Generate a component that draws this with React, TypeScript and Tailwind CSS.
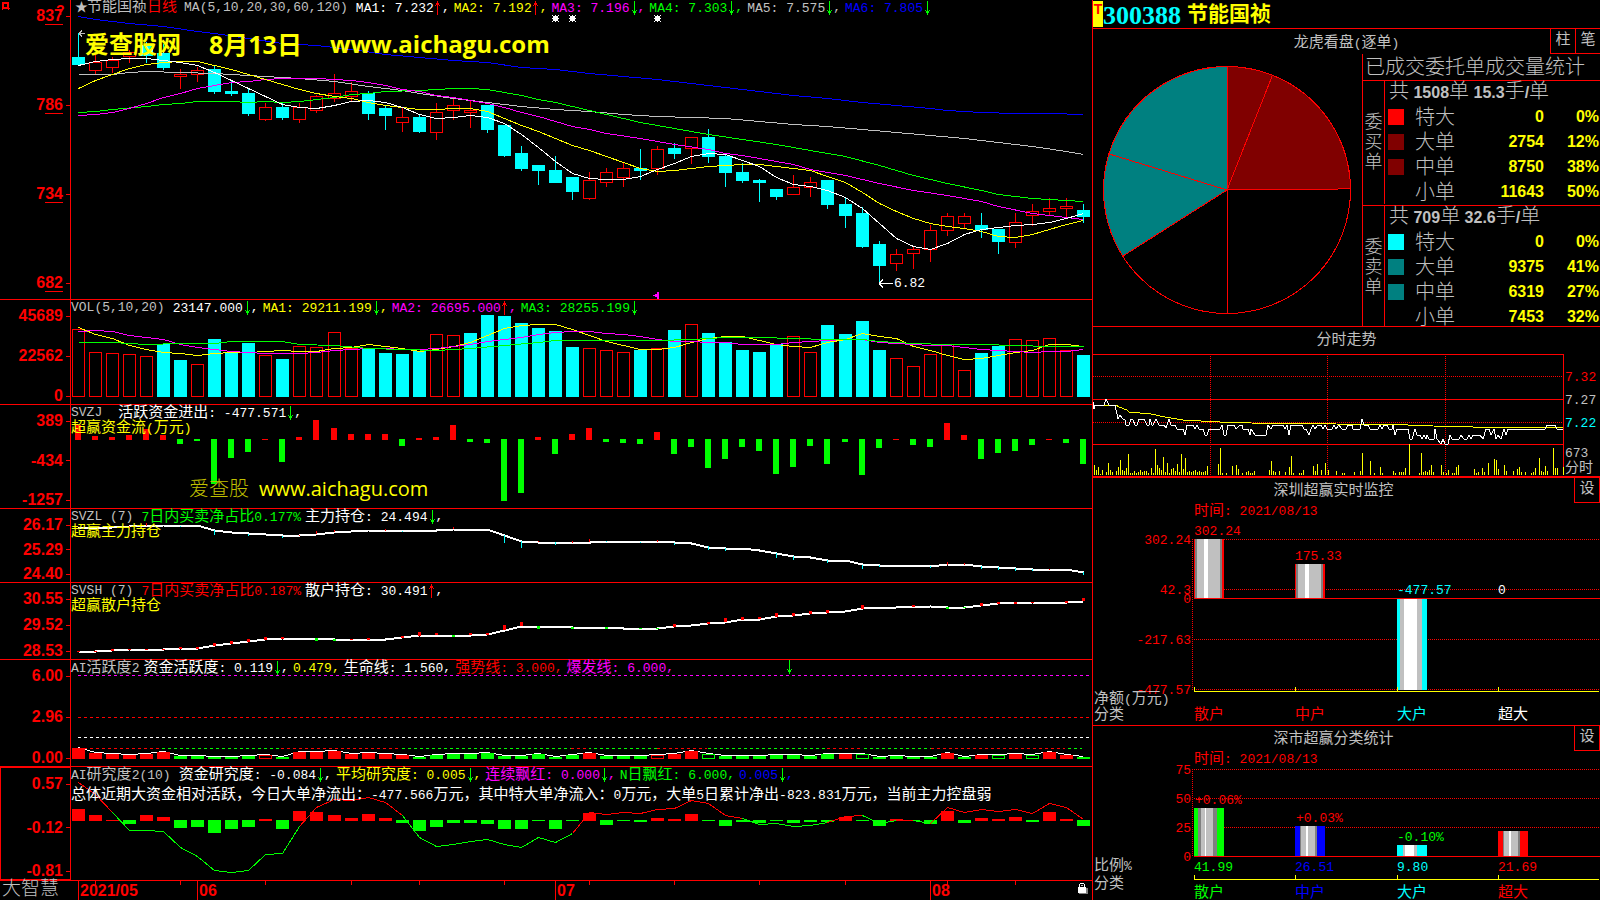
// src/App.tsx
import type { ReactNode } from "react";

const RED = "#ff0000";
const GREEN = "#00ff00";
const CYAN = "#00ffff";
const YELLOW = "#ffff00";
const MAGENTA = "#ff00ff";
const BLUE = "#0000ff";
const SILVER = "#c0c0c0";
const WHITE = "#ffffff";

const CHART_WIDTH = 1021;

type Point = [number, number];

// [high, body top, body bottom, low, rising]
const candles: [number, number, number, number, 0 | 1][] = [
  [33, 57, 65, 65, 0], [55, 62, 71, 74, 1], [57, 60, 68, 73, 1], [50, 52, 57, 63, 1],
  [42, 45, 56, 63, 0], [44, 53, 68, 70, 0], [69, 74, 77, 89, 1], [67, 70, 75, 82, 1],
  [66, 69, 92, 94, 0], [80, 91, 94, 96, 0], [89, 93, 114, 116, 0], [103, 107, 120, 121, 1],
  [103, 107, 118, 120, 0], [103, 107, 120, 123, 1], [95, 96, 111, 113, 1], [74, 93, 99, 102, 1],
  [82, 91, 97, 101, 1], [91, 93, 114, 120, 0], [105, 108, 116, 130, 0], [107, 117, 123, 132, 1],
  [114, 117, 132, 133, 0], [103, 112, 133, 140, 1], [97, 105, 111, 120, 1], [101, 110, 113, 128, 1],
  [105, 105, 130, 133, 0], [125, 125, 156, 157, 0], [146, 153, 169, 171, 0], [165, 165, 171, 185, 0],
  [156, 170, 183, 183, 0], [177, 177, 192, 200, 0], [172, 180, 199, 200, 1], [168, 172, 183, 187, 1],
  [163, 168, 178, 187, 1], [149, 168, 171, 180, 0], [146, 149, 169, 175, 1], [143, 148, 154, 159, 0],
  [137, 137, 149, 164, 1], [129, 137, 157, 163, 0], [153, 156, 173, 187, 0], [163, 172, 181, 183, 0],
  [179, 180, 183, 202, 0], [189, 189, 197, 200, 0], [175, 187, 195, 195, 1], [177, 182, 188, 197, 1],
  [180, 180, 205, 209, 0], [198, 204, 216, 228, 0], [207, 213, 247, 248, 0], [241, 244, 266, 284, 0],
  [249, 254, 264, 271, 1], [247, 249, 254, 269, 1], [225, 230, 250, 262, 1], [213, 216, 231, 236, 1],
  [213, 216, 224, 228, 1], [213, 225, 230, 238, 0], [229, 229, 242, 254, 0], [213, 222, 243, 248, 1],
  [204, 211, 216, 226, 1], [198, 208, 212, 215, 1], [198, 206, 209, 217, 1], [204, 210, 217, 223, 0],
];

const ma5 = [
  65, 61, 59, 58, 58, 60, 62, 65, 72, 80, 88, 96, 104, 107, 108, 105, 101, 100, 102, 107,
  114, 118, 117, 115, 117, 123, 134, 147, 161, 173, 178, 179, 179, 176, 169, 163, 156, 153, 154, 160,
  166, 177, 184, 186, 190, 197, 208, 223, 238, 246, 249, 243, 234, 229, 227, 225, 224, 222, 218, 213,
];
const ma10 = [
  88, 80, 74, 68, 64, 62, 61, 61, 65, 69, 74, 79, 84, 89, 93, 96, 98, 102, 105, 107,
  109, 109, 108, 108, 111, 118, 125, 131, 138, 145, 150, 156, 162, 168, 171, 170, 168, 166, 165, 164,
  164, 166, 168, 170, 176, 182, 192, 203, 211, 218, 223, 226, 228, 231, 236, 237, 234, 229, 224, 220,
];
const ma20: Point[] = [
  [0, 115], [1, 114], [2, 112], [3, 108], [4, 103], [5, 97], [6, 93], [7, 88], [8, 85], [9, 82],
  [10, 81], [11, 79], [12, 78], [14, 78], [15, 79], [16, 80], [17, 82], [18, 85], [19, 89], [20, 91],
  [21, 95], [22, 97], [23, 100], [24, 103], [25, 107], [26, 112], [27, 116], [28, 121], [29, 126],
  [30, 129], [31, 133], [33, 138], [35, 144], [37, 149], [38, 153], [39, 155], [40, 158], [42, 164],
  [43, 169], [45, 175], [47, 183], [49, 190], [51, 195], [53, 201], [54, 206], [56, 213], [58, 217], [59, 219],
];
const ma30: Point[] = [
  [0, 112], [1, 111], [2, 109], [4, 106], [5, 104], [6, 103], [7, 101], [9, 101], [10, 102], [11, 101],
  [12, 102], [13, 101], [15, 97], [16, 94], [17, 93], [18, 91], [20, 90], [21, 89], [22, 88], [23, 88],
  [24, 89], [25, 92], [26, 95], [27, 99], [28, 102], [30, 110], [31, 114], [33, 122], [35, 128], [37, 134],
  [39, 139], [41, 144], [43, 150], [45, 156], [47, 165], [49, 175], [51, 183], [53, 190], [54, 194], [56, 198], [59, 201],
];
const ma60: Point[] = [
  [0, 74], [2, 74], [3, 72], [4, 71], [6, 72], [8, 73], [9, 74], [11, 76], [13, 78], [15, 81], [17, 86],
  [19, 90], [20, 93], [22, 98], [24, 102], [26, 106], [28, 109], [30, 111], [32, 114], [34, 116], [36, 117],
  [38, 118], [40, 121], [42, 124], [44, 126], [46, 129], [48, 132], [50, 135], [52, 138], [54, 142], [56, 146],
  [58, 151], [59, 154],
];
const ma120: Point[] = [
  [0, 16], [1, 19], [3, 23], [5, 26], [7, 31], [8, 33], [10, 38], [12, 43], [14, 45], [16, 49], [18, 54],
  [20, 57], [22, 60], [24, 62], [26, 67], [28, 69], [30, 73], [32, 76], [34, 79], [36, 83], [38, 87], [40, 91],
  [42, 95], [44, 98], [46, 102], [48, 105], [50, 108], [51, 110], [53, 112], [55, 113], [57, 113], [59, 114],
];

// negative: falling day
const volumes = [
  68, 45, 44, 43, 41, -53, -37, 33, -58, -44, -54, 42, -38, 51, 50, 65, 49, -48, -44, -43,
  -46, 63, 62, -64, -82, -81, -74, -69, -66, -50, 49, 47, 45, -47, 49, -67, 73, -64, -55, -47,
  -45, -53, 61, 45, -72, -63, -76, -47, 39, 31, 43, 53, 27, -44, -51, 58, 57, 59, 47, -42,
];
const volMa5 = [
  27, 34, 38, 45, 49, 52, 53, 55, 53, 52, 52, 51, 50, 51, 51, 48, 47, 44, 46, 48,
  51, 49, 46, 42, 35, 28, 25, 24, 24, 29, 35, 41, 45, 49, 49, 47, 42, 38, 36, 36,
  40, 44, 46, 47, 42, 39, 33, 36, 38, 46, 50, 55, 59, 58, 55, 52, 50, 44, 44, 46,
];
const volMa10 = [
  31, 30, 31, 35, 37, 39, 44, 47, 49, 51, 52, 53, 53, 53, 52, 50, 49, 48, 48, 49,
  49, 48, 46, 44, 41, 39, 37, 34, 32, 31, 31, 33, 34, 36, 39, 41, 41, 42, 42, 44,
  44, 44, 42, 41, 40, 39, 39, 42, 43, 44, 45, 45, 47, 49, 50, 51, 52, 51, 51, 49,
];
const volMa20: Point[] = [
  [0, 42], [2, 42], [4, 44], [6, 43], [8, 43], [9, 41], [12, 41], [13, 44], [15, 45], [17, 48], [19, 49],
  [21, 50], [23, 48], [25, 45], [27, 42], [28, 40], [34, 40], [36, 39], [38, 37], [40, 37], [42, 38], [44, 39],
  [46, 39], [47, 41], [49, 43], [51, 44], [53, 44], [55, 45], [57, 46], [59, 46],
];

const fundFlow = [
  15, 4, 3, 5, 11, 5, -5, -2, -45, -19, -13, 1, -23, 3, 20, 12, 6, 6, 6, -7,
  2, 3, 15, -3, -4, -62, -54, 3, -15, 6, 12, -3, -4, -5, 8, -15, -8, -29, -20, -8,
  -12, -35, -28, -7, -25, -3, -36, -9, 1, -6, -8, 17, 5, -20, -14, -12, -6, 1, -4, -25,
];

const mainHolding: Point[] = [
  [0, 19], [2, 18], [3, 17], [5, 16], [7, 16], [8, 21], [9, 23], [10, 24], [11, 25], [12, 26], [13, 26],
  [14, 25], [15, 23], [17, 21], [21, 21], [22, 20], [24, 20], [25, 26], [26, 32], [27, 33], [30, 33], [30, 32],
  [34, 32], [35, 33], [36, 34], [37, 38], [38, 39], [39, 39], [40, 41], [41, 44], [42, 47], [43, 48], [44, 51],
  [45, 51], [46, 55], [47, 56], [50, 57], [51, 55], [52, 55], [53, 57], [54, 58], [55, 59], [56, 60], [58, 60], [59, 63],
];
// [index, y, height, colour]
const mainMarks: [number, number, number, string][] = [
  [3, 17, 2, RED], [4, 14, 3, RED], [6, 17, 1, CYAN], [8, 21, 5, CYAN], [10, 25, 2, CYAN], [12, 27, 2, CYAN], [13, 26, 1, RED],
  [14, 22, 3, RED], [15, 21, 2, RED], [18, 20, 2, RED], [19, 22, 1, CYAN], [22, 18, 2, RED], [25, 26, 8, CYAN],
  [26, 32, 7, CYAN], [27, 32, 1, RED], [28, 33, 3, CYAN], [29, 32, 2, RED], [30, 30, 3, RED], [31, 32, 1, CYAN],
  [33, 33, 1, CYAN], [34, 31, 2, RED], [35, 34, 2, CYAN], [37, 37, 4, CYAN], [38, 39, 3, CYAN], [41, 44, 5, CYAN],
  [42, 47, 4, CYAN], [44, 51, 3, CYAN], [46, 56, 4, CYAN], [47, 56, 2, CYAN], [50, 57, 2, CYAN], [51, 53, 3, RED],
  [52, 54, 2, RED], [53, 57, 3, CYAN], [54, 58, 3, CYAN], [55, 59, 3, CYAN], [56, 60, 2, CYAN], [57, 60, 1, RED], [59, 63, 3, CYAN],
];

const retailHolding: Point[] = [
  [0, 68], [1, 68], [2, 67], [3, 66], [5, 66], [6, 65], [7, 65], [8, 62], [9, 60], [10, 58], [11, 56], [12, 55],
  [14, 55], [15, 56], [18, 56], [19, 54], [20, 52], [23, 52], [24, 51], [25, 47], [26, 43], [28, 43], [29, 44],
  [31, 44], [32, 45], [34, 45], [35, 43], [36, 42], [37, 40], [38, 39], [39, 36], [40, 36], [41, 33], [42, 32],
  [43, 30], [44, 29], [45, 28], [46, 25], [48, 24], [50, 23], [51, 24], [52, 24], [53, 22], [54, 20], [56, 19],
  [58, 19], [59, 18],
];
const retailMarks: [number, number, number, string][] = [
  [0, 68, 1, RED], [1, 68, 1, RED], [2, 66, 2, RED], [3, 66, 1, RED], [4, 66, 1, RED], [5, 66, 1, RED], [6, 64, 2, RED], [7, 64, 2, RED], [8, 60, 3, RED],
  [9, 58, 3, RED], [10, 56, 3, RED], [11, 54, 3, RED], [12, 54, 2, RED], [14, 55, 3, GREEN], [15, 56, 2, GREEN],
  [16, 56, 1, RED], [17, 55, 2, RED], [19, 53, 2, RED], [20, 49, 4, RED], [21, 50, 2, RED], [22, 52, 2, GREEN],
  [23, 50, 2, RED], [24, 50, 2, RED], [25, 42, 5, RED], [26, 39, 4, RED], [27, 43, 3, GREEN], [29, 44, 2, GREEN],
  [31, 44, 2, GREEN], [33, 45, 1, GREEN], [34, 45, 1, GREEN], [35, 41, 3, RED], [37, 39, 2, RED], [38, 35, 4, RED],
  [39, 34, 3, RED], [40, 34, 2, RED], [41, 30, 4, RED], [42, 30, 3, RED], [43, 28, 3, RED], [44, 27, 3, RED],
  [46, 22, 4, RED], [49, 22, 2, RED], [51, 24, 2, GREEN], [52, 24, 1, GREEN], [53, 20, 3, RED], [54, 19, 2, RED],
  [55, 19, 2, RED], [56, 19, 1, RED], [58, 18, 2, RED], [59, 15, 3, RED],
];

// kind: r/g filled, R/G outlined
const activity = (
  "r11 r6 r5 r4 r5 r7 g3 g3 g2 g2 g3 R4 g2 r7 r7 r8 r5 r6 r5 r4 g2 g4 g5 g5 g6 g3 g3 g5 g2 g4 " +
  "r6 g3 g3 g3 R4 r5 r8 G5 g3 g3 g3 g4 g4 g3 g5 r5 G5 g2 g3 g2 g2 r6 g2 r4 G4 r5 G4 r7 r4 g2"
).split(" ").map((s) => ({ kind: s[0], h: Number(s.slice(1)) }));

const researchBars = [
  12, 6, 1, -4, 6, 4, -8, -7, -13, -9, -7, 2, -9, 10, 9, 6, 3, 7, 3, -3,
  -11, -7, -3, -3, -4, -9, -9, -1, -9, -1, 8, -5, -1, -2, 3, 2, 7, -1, -6, -2,
  -3, -1, -3, -2, -2, 4, -1, -6, 2, -1, -4, 10, -3, 3, 2, 4, -2, 9, 2, -6,
];
const researchLine = [
  15, 27, 45, 63, 63, 64, 80, 89, 103, 105, 103, 87, 86, 59, 40, 32, 33, 30, 35, 48,
  70, 79, 77, 74, 72, 77, 80, 70, 75, 66, 45, 47, 45, 46, 42, 41, 33, 36, 48, 51,
  57, 56, 59, 58, 55, 49, 48, 56, 53, 53, 56, 40, 45, 42, 44, 42, 46, 36, 40, 52,
];
const researchSegments: [number, number, string][] = [
  [0, 2, RED], [2, 13, GREEN], [13, 19, RED], [19, 29, GREEN], [29, 39, RED], [39, 44, GREEN],
  [44, 46, RED], [46, 48, GREEN], [48, 49, RED], [49, 50, GREEN], [50, 59, RED],
];

const intradayPrice =
  "0,48 1,55 2,51 11,51 13,45 16,51 22,51 25,65 27,61 30,65 32,66 33,71 36,71 38,65 40,66 42,71 44,71 46,65 51,65 " +
  "54,71 56,71 57,65 59,71 60,71 63,65 66,71 71,71 73,74 76,65 78,71 82,71 84,75 90,75 92,81 94,71 100,71 102,75 " +
  "104,71 106,75 110,75 112,81 114,81 116,75 127,75 129,71 131,81 133,81 135,71 141,71 143,75 147,71 149,71 150,75 " +
  "155,75 157,81 158,75 162,81 173,81 175,71 178,75 180,71 190,71 192,75 194,71 196,81 198,71 209,71 211,75 213,75 " +
  "216,81 218,75 220,71 222,75 225,71 228,71 230,75 232,71 234,75 239,75 241,71 243,75 246,71 249,75 253,75 255,71 " +
  "259,71 260,75 267,75 269,65 271,71 275,71 277,75 285,75 287,71 289,75 291,71 294,71 296,75 299,75 300,71 302,81 " +
  "304,75 315,75 317,85 319,85 322,75 324,81 327,81 329,85 331,81 333,85 334,81 336,85 341,85 342,75 344,85 348,90 " +
  "350,85 352,90 355,90 357,81 359,85 366,85 368,81 371,85 374,85 376,81 378,85 380,81 387,81 390,85 393,75 396,75 " +
  "398,81 401,75 403,85 405,81 408,85 411,75 413,81 415,75 452,75 454,71 462,71 464,75 470,75";
const intradayAverage =
  "0,51 23,51 26,53 34,56 36,58 58,60 72,63 90,66 108,67 127,68 157,68 158,69 243,70 315,71 340,72 380,73 470,73";
const intradayVolume: Point[] = [
  [1, 10], [3, 5], [5, 8], [7, 1], [9, 5], [13, 3], [15, 12], [17, 5], [19, 3], [23, 4], [25, 8], [27, 15], [29, 5],
  [31, 4], [33, 7], [35, 21], [37, 2], [39, 2], [41, 4], [43, 2], [45, 3], [47, 5], [49, 3], [51, 4], [53, 4], [55, 2],
  [58, 7], [60, 2], [62, 26], [64, 10], [66, 7], [68, 5], [70, 18], [72, 3], [74, 12], [76, 2], [78, 6], [80, 7], [82, 4],
  [84, 11], [86, 3], [88, 21], [90, 6], [92, 17], [94, 3], [96, 4], [98, 3], [100, 4], [102, 5], [104, 3], [106, 4],
  [108, 3], [110, 3], [112, 4], [114, 9], [125, 11], [127, 27], [129, 2], [133, 2], [139, 9], [143, 10], [145, 6],
  [149, 2], [153, 3], [155, 4], [157, 2], [159, 2], [161, 4], [176, 5], [178, 14], [180, 4], [182, 3], [186, 4],
  [192, 3], [196, 8], [198, 19], [200, 2], [206, 2], [208, 2], [210, 5], [220, 9], [222, 4], [224, 11], [228, 5],
  [232, 12], [235, 5], [243, 4], [249, 2], [251, 2], [261, 3], [267, 4], [269, 22], [277, 14], [281, 2], [287, 8],
  [289, 2], [300, 4], [302, 2], [306, 3], [308, 3], [310, 3], [312, 7], [316, 31], [326, 2], [328, 22], [330, 3],
  [332, 4], [334, 3], [336, 5], [338, 10], [340, 3], [348, 10], [350, 3], [353, 2], [355, 5], [359, 2], [361, 2],
  [363, 8], [365, 10], [381, 6], [383, 2], [385, 3], [389, 7], [391, 3], [395, 12], [401, 16], [403, 15], [405, 6],
  [411, 10], [413, 4], [420, 4], [424, 6], [426, 8], [428, 3], [432, 3], [438, 2], [440, 3], [442, 7], [446, 17],
  [448, 4], [450, 3], [452, 9], [454, 4], [460, 27], [462, 7], [464, 7], [470, 8],
];

const barX = (i: number) => 7 + 17 * i + (i >= 15 ? 1 : 0) + (i >= 45 ? 1 : 0);
const toPoints = (points: Point[]) =>
  points.map(([i, y]) => `${barX(i) + 0.5},${y + 0.5}`).join(" ");
const indexed = (values: number[]): Point[] => values.map((v, i) => [i, v]);

const Line = ({ points, color, width = 1 }: { points: Point[]; color: string; width?: number }) => (
  <polyline points={toPoints(points)} fill="none" stroke={color} strokeWidth={width} />
);

// CJK and Latin runs need different sizes to keep the terminal's 15px / 8px pitch
const Mixed = ({
  text,
  cjk = "text-[15px]",
  latin = "text-[13px]",
}: {
  text: string;
  cjk?: string;
  latin?: string;
}) => (
  <>
    {text.split(/([\u3000-\u9fff\uff00-\uffef]+)/).map((run, i) => (
      <span key={i} className={i % 2 ? cjk : latin}>
        {run}
      </span>
    ))}
  </>
);

const Arrow = ({ dir }: { dir: "up" | "down" }) => (
  <svg
    viewBox="0 0 8 14"
    className={`h-3.5 w-2 shrink-0 ${dir === "up" ? "rotate-180" : ""}`}
    shapeRendering="crispEdges"
    fill={dir === "up" ? RED : GREEN}
  >
    <path d="M4 0h1v14h-1zM2 9h1v1h3v-1h1v1h-1v2h-3v-2h-1z" />
  </svg>
);

type Reading = { text: string; color: string; dir?: "up" | "down"; end?: boolean };

const Readings = ({ title, items }: { title: ReactNode; items: Reading[] }) => (
  <div className="absolute left-0 top-0 flex h-4 items-center gap-1 whitespace-pre leading-4 text-[#c0c0c0]">
    {title}
    {items.map((item) => (
      <span key={item.text} className={`flex items-center ${item.color}`}>
        <span className="leading-4">
          <Mixed text={item.text} />
        </span>
        {item.dir && <Arrow dir={item.dir} />}
        {!item.end && <span className="text-[13px]">,</span>}
      </span>
    ))}
  </div>
);

type PanelProps = {
  labels: ReactNode[];
  height: string;
  viewHeight: number;
  axisClass?: string;
  chart: ReactNode;
  children: ReactNode;
};

const Panel = ({ labels, height, viewHeight, axisClass = "border-r", chart, children }: PanelProps) => (
  <section className={`flex border-b border-[#ff0000] ${height}`}>
    <div
      className={`flex w-[71px] shrink-0 flex-col justify-between border-[#ff0000] pt-2 font-['Liberation_Sans',sans-serif] text-base font-bold leading-4 text-[#ff0000] ${axisClass}`}
    >
      {labels.map((label, i) => (
        <div key={i} className="flex items-center justify-end gap-[3px]">
          <span>{label}</span>
          <span className="h-px w-1 bg-[#ff0000]" />
        </div>
      ))}
    </div>
    <div className="relative min-w-0 flex-1">
      <svg
        viewBox={`0 0 ${CHART_WIDTH} ${viewHeight}`}
        preserveAspectRatio="none"
        shapeRendering="crispEdges"
        className="block h-full w-full"
      >
        {chart}
      </svg>
      {children}
    </div>
  </section>
);

const Star = ({ x }: { x: number }) => (
  <path
    d={`M${x - 2} 16h5v5h-5zM${x} 15h1v7h-1zM${x - 3} 18h7v1h-7zM${x - 3} 15h1v1h-1zM${x + 3} 15h1v1h-1zM${x - 3} 21h1v1h-1zM${x + 3} 21h1v1h-1z`}
    fill={WHITE}
  />
);

const underlined = (n: string) => (
  <>
    {n[0]}
    <span className="border-b border-[#ff0000]">{n.slice(1)}</span>
  </>
);

const PricePanel = () => (
  <Panel
    height="h-[300px]"
    viewHeight={299}
    axisClass="border-r pb-2"
    labels={["837", "786", "734", "682"].map(underlined)}
    chart={
      <>
        <Line points={ma120} color={BLUE} />
        {candles.map(([high, top, bottom, low, up], i) => {
          const color = up ? RED : CYAN;
          const x = barX(i);
          return (
            <g key={i}>
              <rect x={x} y={high} width={1} height={low - high} fill={color} />
              {up ? (
                <rect x={x - 5.5} y={top + 0.5} width={12} height={bottom - top - 1} fill="#000" stroke={color} />
              ) : (
                <rect x={x - 6} y={top} width={13} height={bottom - top} fill={color} />
              )}
            </g>
          );
        })}
        <Line points={ma60} color={SILVER} />
        <Line points={ma30} color={GREEN} />
        <Line points={ma20} color={MAGENTA} />
        <Line points={indexed(ma10)} color={YELLOW} />
        <Line points={indexed(ma5)} color={WHITE} />
        <path d="M8 33.5h6M8 33.5l3 -3M8 33.5l3 3" stroke={SILVER} fill="none" />
        <path d="M808 283.5h14M808 283.5l4 -4M808 283.5l4 4" stroke={WHITE} fill="none" />
        <Star x={barX(28)} />
        <Star x={barX(29)} />
        <Star x={barX(34)} />
        <path d="M582 295h2v-1h2v-2h2v7h-2v-2h-2v-1h-2z" fill={MAGENTA} />
      </>
    }
  >
    <Readings
      title={
        <span className="mr-1 flex items-center gap-[7px] pl-1">
          <span className="flex items-center">
            <span className="w-3 text-[13px]">★</span>
            <Mixed text="节能国祯" />
            <span className="text-[15px] text-[#ff0000]">日线</span>
          </span>
          <span className="text-[13px]">MA(5,10,20,30,60,120)</span>
        </span>
      }
      items={[
        { text: "MA1: 7.232", color: "text-white", dir: "up" },
        { text: "MA2: 7.192", color: "text-[#ffff00]", dir: "up" },
        { text: "MA3: 7.196", color: "text-[#ff00ff]", dir: "down" },
        { text: "MA4: 7.303", color: "text-[#00ff00]", dir: "down" },
        { text: "MA5: 7.575", color: "text-[#c0c0c0]", dir: "down" },
        { text: "MA6: 7.805", color: "text-[#0000ff]", dir: "down", end: true },
      ]}
    />
    <p className="absolute left-3.5 top-7 flex gap-7 whitespace-nowrap font-['Open_Sans','Noto_Sans_CJK_SC',sans-serif] text-2xl font-bold text-[#ffff00]">
      <span>爱查股网</span>
      <span className="text-[25px]">8月13日</span>
      <span>www.aichagu.com</span>
    </p>
    <span className="absolute left-[80.6%] top-[276px] text-[13px] leading-4 text-white">6.82</span>
  </Panel>
);

const VolumePanel = () => (
  <Panel
    height="h-[105px]"
    viewHeight={104}
    labels={["45689", "22562", "0"]}
    chart={
      <>
        {volumes.map((v, i) => {
          const x = barX(i);
          return v > 0 ? (
            <rect key={i} x={x - 5.5} y={97.5 - v} width={12} height={v - 1} fill="none" stroke={RED} />
          ) : (
            <rect key={i} x={x - 6} y={97 + v} width={13} height={-v} fill={CYAN} />
          );
        })}
        <Line points={indexed(volMa5)} color={YELLOW} />
        <Line points={indexed(volMa10)} color={MAGENTA} />
        <Line points={volMa20} color={GREEN} />
      </>
    }
  >
    <Readings
      title={<span className="mr-1 text-[13px]">VOL(5,10,20)</span>}
      items={[
        { text: "23147.000", color: "text-white", dir: "down" },
        { text: "MA1: 29211.199", color: "text-[#ffff00]", dir: "down" },
        { text: "MA2: 26695.000", color: "text-[#ff00ff]", dir: "up" },
        { text: "MA3: 28255.199", color: "text-[#00ff00]", dir: "down", end: true },
      ]}
    />
  </Panel>
);

const PanelCaption = ({ text }: { text: string }) => (
  <p className="absolute left-0 top-[15px] leading-4 text-[#ffff00]">
    <Mixed text={text} />
  </p>
);

const FundFlowPanel = () => (
  <Panel
    height="h-[104px]"
    viewHeight={103}
    labels={["389", "-434", "-1257"]}
    chart={fundFlow.map((v, i) => (
      <rect
        key={i}
        x={barX(i) - 3}
        y={v > 0 ? 35 - v : 34}
        width={6}
        height={Math.abs(v)}
        fill={v > 0 ? RED : GREEN}
      />
    ))}
  >
    <Readings
      title={<span className="mr-3 text-[13px]">SVZJ</span>}
      items={[{ text: "活跃资金进出: -477.571", color: "text-white", dir: "down" }]}
    />
    <PanelCaption text="超赢资金流(万元)" />
    <p className="absolute left-[118px] top-[68px] flex items-center gap-2.5 whitespace-nowrap font-['Open_Sans','Noto_Sans_CJK_SC',sans-serif] text-xl leading-8 text-[#ffff00]">
      <span className="font-light text-[#c0c000]">爱查股</span>
      <span>www.aichagu.com</span>
    </p>
  </Panel>
);

const MainHoldingPanel = () => (
  <Panel
    height="h-[74px]"
    viewHeight={73}
    labels={["26.17", "25.29", "24.40"]}
    chart={
      <>
        <Line points={mainHolding} color={WHITE} width={2} />
        {mainMarks.map(([i, y, h, color]) => (
          <rect key={i} x={barX(i)} y={y} width={1} height={h} fill={color} />
        ))}
      </>
    }
  >
    <Readings
      title={
        <>
          <span className="mr-1 text-[13px]">SVZL (7)</span>
          <span className="text-[#00ff00]">
            <Mixed text="7日内买卖净占比0.177%" />
          </span>
        </>
      }
      items={[{ text: "主力持仓: 24.494", color: "text-white", dir: "down" }]}
    />
    <PanelCaption text="超赢主力持仓" />
  </Panel>
);

const RetailHoldingPanel = () => (
  <Panel
    height="h-[77px]"
    viewHeight={76}
    labels={["30.55", "29.52", "28.53"]}
    chart={
      <>
        <Line points={retailHolding} color={WHITE} width={2} />
        {retailMarks.map(([i, y, h, color]) => (
          <rect key={i} x={barX(i) - 1} y={y} width={3} height={h} fill={color} />
        ))}
      </>
    }
  >
    <Readings
      title={
        <>
          <span className="mr-1 text-[13px]">SVSH (7)</span>
          <span className="text-[#ff0000]">
            <Mixed text="7日内买卖净占比0.187%" />
          </span>
        </>
      }
      items={[{ text: "散户持仓: 30.491", color: "text-white", dir: "up" }]}
    />
    <PanelCaption text="超赢散户持仓" />
  </Panel>
);

const DashedRule = ({ y, color, from = 7, to = 1021 }: { y: number; color: string; from?: number; to?: number }) => (
  <line x1={from} x2={to} y1={y + 0.5} y2={y + 0.5} stroke={color} strokeDasharray="3 3" />
);

const ActivityPanel = () => (
  <Panel
    height="h-[107px]"
    viewHeight={106}
    labels={["6.00", "2.96", "0.00"]}
    chart={
      <>
        <DashedRule y={15} color={MAGENTA} />
        <DashedRule y={57} color={RED} />
        <DashedRule y={77} color={WHITE} />
        <DashedRule y={88} color={GREEN} from={91} to={1011} />
        {([[7, 91], [210, 330], [500, 518], [586, 636], [756, 792], [860, 994]] as Point[]).map(([a, b]) => (
          <g key={a}>
            <rect x={a} y={88} width={b - a} height={1} fill="#000" />
            <DashedRule y={88} color={RED} from={a} to={b} />
          </g>
        ))}
        <Line points={activity.map(({ h }, i) => [i, 98 - h])} color={WHITE} />
        {activity.map(({ kind, h }, i) => {
          const color = kind.toLowerCase() === "r" ? RED : GREEN;
          const x = barX(i);
          return kind === "R" || kind === "G" ? (
            <rect key={i} x={x - 5.5} y={99.5 - h} width={12} height={h - 1} fill="#000" stroke={color} />
          ) : (
            <rect key={i} x={x - 6} y={99 - h} width={13} height={h} fill={color} />
          );
        })}
      </>
    }
  >
    <Readings
      title={<span><Mixed text="AI活跃度2" /></span>}
      items={[
        { text: "资金活跃度: 0.119", color: "text-white", dir: "down" },
        { text: "0.479", color: "text-[#ffff00]" },
        { text: "生命线: 1.560", color: "text-white" },
        { text: "强势线: 3.000", color: "text-[#ff0000]" },
        { text: "爆发线: 6.000", color: "text-[#ff00ff]" },
      ]}
    />
    <div className="absolute left-[69.9%] top-0">
      <Arrow dir="down" />
    </div>
  </Panel>
);

const ResearchPanel = () => (
  <Panel
    height="h-[114px]"
    viewHeight={113}
    axisClass="border"
    labels={["0.57", "-0.12", "-0.81"]}
    chart={
      <>
        {researchBars.map((v, i) => (
          <rect
            key={i}
            x={barX(i) - 6}
            y={v > 0 ? 54 - v : 53}
            width={13}
            height={Math.abs(v)}
            fill={v > 0 ? RED : GREEN}
          />
        ))}
        {researchSegments.map(([from, to, color]) => (
          <Line key={from} points={indexed(researchLine).slice(from, to + 1)} color={color} />
        ))}
      </>
    }
  >
    <Readings
      title={<span className="mr-1"><Mixed text="AI研究度2(10)" /></span>}
      items={[
        { text: "资金研究度: -0.084", color: "text-white", dir: "down" },
        { text: "平均研究度: 0.005", color: "text-[#ffff00]", dir: "down" },
        { text: "连续飘红: 0.000", color: "text-[#ff00ff]", dir: "down" },
        { text: "N日飘红: 6.000", color: "text-[#00ff00]" },
        { text: "0.005", color: "text-[#0000ff]", dir: "down" },
      ]}
    />
    <p className="absolute left-0 top-5 whitespace-nowrap leading-4 text-white">
      <Mixed text="总体近期大资金相对活跃，今日大单净流出：-477.566万元，其中特大单净流入：0万元，大单5日累计净出-823.831万元，当前主力控盘弱" />
    </p>
  </Panel>
);

const TimeAxis = () => (
  <footer className="flex h-[19px]">
    <div className="w-[71px] shrink-0 pl-0.5 text-[19px] font-light leading-[19px] text-[#c0c0c0]">大智慧</div>
    <div className="relative grid min-w-0 flex-1 grid-cols-[7fr_119fr_358fr_375fr_162fr] font-['Liberation_Sans',sans-serif] text-base font-bold leading-[19px] text-[#ff0000]">
      <svg
        viewBox={`0 0 ${CHART_WIDTH} 4`}
        preserveAspectRatio="none"
        shapeRendering="crispEdges"
        className="absolute left-0 top-0 h-1 w-full"
      >
        {[1, 6, 11, 16, 20, 25, 30, 35, 40, 45, 51, 55].map((i) => (
          <rect key={i} x={barX(i)} y={0} width={1} height={4} fill={RED} />
        ))}
      </svg>
      <span />
      {["2021/05", "06", "07", "08"].map((label) => (
        <span key={label} className="border-l border-[#ff0000] pl-px">
          {label}
        </span>
      ))}
      <svg viewBox="0 0 10 11" shapeRendering="crispEdges" className="absolute right-1 top-0.5 h-[11px] w-2.5">
        <path d="M2 0.500h4M1.500 1v3M6.500 1v3" stroke={WHITE} fill="none" />
        <rect x={3} y={2} width={2} height={1} fill={SILVER} />
        <rect x={1} y={5} width={9} height={6} fill="#808080" />
        <rect x={0} y={4} width={8} height={6} fill={WHITE} />
      </svg>
    </div>
  </footer>
);

const CENTER: Point = [134, 136];
const RADIUS = 123.5;
const onPie = (deg: number) => {
  const a = (deg * Math.PI) / 180;
  return `${(CENTER[0] + RADIUS * Math.sin(a)).toFixed(1)} ${(CENTER[1] - RADIUS * Math.cos(a)).toFixed(1)}`;
};
const slices: [number, number, string][] = [
  [0, 21.6, "#800000"],
  [21.6, 89.5, "#800000"],
  [89.5, 180, "#000000"],
  [180, 237.6, "#000000"],
  [237.6, 287, "#008080"],
  [287, 360, "#008080"],
];

const OrderPie = () => (
  <svg viewBox="0 0 269 272" className="block h-68 w-[269px] shrink-0" shapeRendering="crispEdges">
    {slices.map(([from, to, fill]) => (
      <path
        key={from}
        d={`M${CENTER[0]} ${CENTER[1]}L${onPie(from)}A${RADIUS} ${RADIUS} 0 0 1 ${onPie(to)}Z`}
        fill={fill}
        stroke={from === 180 ? "none" : RED}
      />
    ))}
    <circle cx={CENTER[0]} cy={CENTER[1]} r={RADIUS} fill="none" stroke={RED} />
  </svg>
);

type OrderRow = { swatch: string; label: string; count: string; share: string };

const buyRows: OrderRow[] = [
  { swatch: "bg-[#ff0000]", label: "特大", count: "0", share: "0%" },
  { swatch: "bg-[#800000]", label: "大单", count: "2754", share: "12%" },
  { swatch: "bg-[#800000]", label: "中单", count: "8750", share: "38%" },
  { swatch: "bg-black", label: "小单", count: "11643", share: "50%" },
];
const sellRows: OrderRow[] = [
  { swatch: "bg-[#00ffff]", label: "特大", count: "0", share: "0%" },
  { swatch: "bg-[#008080]", label: "大单", count: "9375", share: "41%" },
  { swatch: "bg-[#008080]", label: "中单", count: "6319", share: "27%" },
  { swatch: "bg-black", label: "小单", count: "7453", share: "32%" },
];

const OrderBlock = ({
  side,
  summary,
  rows,
  className = "",
}: {
  side: string;
  summary: string;
  rows: OrderRow[];
  className?: string;
}) => (
  <div className={`flex border-[#ff0000] ${className}`}>
    <div className="flex w-[22px] shrink-0 items-center justify-center border-r border-[#ff0000]">
      <span className="w-[18px] break-all text-lg font-light leading-5">{side}</span>
    </div>
    <table className="w-full border-collapse font-['Liberation_Sans','Noto_Sans_CJK_SC',sans-serif] leading-6">
      <caption className="h-[23px] whitespace-pre pl-1 text-left leading-5">
        <Mixed text={summary} cjk="text-xl font-light leading-5" latin="text-base font-bold leading-5" />
      </caption>
      <tbody>
        {rows.map((row) => (
          <tr key={row.label} className="h-[25px]">
            <td className="w-[30px] p-0 pl-[3px]">
              <div className={`h-4 w-4 ${row.swatch}`} />
            </td>
            <th scope="row" className="p-0 text-left text-xl font-light leading-5">
              {row.label}
            </th>
            <td className="p-0 text-right font-bold leading-5 text-[#ffff00]">{row.count}</td>
            <td className="w-[56px] p-0 pr-px text-right font-bold leading-5 text-[#ffff00]">{row.share}</td>
          </tr>
        ))}
      </tbody>
    </table>
  </div>
);

const TitleButton = ({ label }: { label: string }) => (
  <button
    type="button"
    className="h-[25px] w-[25px] border-b border-l border-[#ff0000] text-[15px] leading-5 text-[#c0c0c0]"
  >
    {label}
  </button>
);

const OrderPanel = () => (
  <section className="border-b border-[#ff0000]">
    <div className="grid h-[25px] grid-cols-[1fr_auto_1fr]">
      <span />
      <h2 className="leading-7">
        <Mixed text="龙虎看盘(逐单)" />
      </h2>
      <div className="flex justify-end">
        <TitleButton label="柱" />
        <TitleButton label="笔" />
      </div>
    </div>
    <div className="flex h-68">
      <OrderPie />
      <div className="flex min-w-0 flex-1 flex-col overflow-hidden border-l border-[#ff0000]">
        <h3 className="h-[27px] shrink-0 whitespace-nowrap border-b border-[#ff0000] pl-0.5 pt-1 text-xl font-light leading-[22px]">
          已成交委托单成交量统计
        </h3>
        <OrderBlock side="委买单" summary="共 1508单 15.3手/单" rows={buyRows} className="border-b pb-px" />
        <OrderBlock side="委卖单" summary="共 709单 32.6手/单" rows={sellRows} />
      </div>
    </div>
  </section>
);

const IntradayPanel = () => (
  <section className="border-b-2 border-[#ff0000]">
    <h2 className="text-center text-[15px] leading-[27px]">分时走势</h2>
    <div className="flex">
      <svg viewBox="0 0 471 121" className="block h-[121px] w-[471px]" shapeRendering="crispEdges">
        <g fill="none" stroke={RED}>
          <path d="M0 0.500H470.500V121M0 45.500H470M0 90.500H470" />
          <path d="M0 22.500H470M0 68.500H470M117.500 0V121M234.500 0V121M352.500 0V121" strokeDasharray="1 1" />
        </g>
        {intradayVolume.map(([x, h]) => (
          <rect key={x} x={x} y={121 - h} width={1} height={h} fill={YELLOW} />
        ))}
        <polyline points={intradayAverage} fill="none" stroke={YELLOW} />
        <polyline points={intradayPrice} fill="none" stroke={WHITE} />
      </svg>
      <div className="flex flex-1 flex-col gap-[7px] whitespace-nowrap pl-px pt-4 text-[13px] leading-4">
        <span className="text-[#ff0000]">7.32</span>
        <span>7.27</span>
        <span className="text-[#00ffff]">7.22</span>
        <span className="mt-2 leading-3.5">
          673
          <br />
          <span className="text-sm leading-3.5">分时</span>
        </span>
      </div>
    </div>
  </section>
);

// stripes: [x offset, width, colour], drawn inside a 30px column
type Column = { x: number; top: number; bottom: number; stripes: [number, number, string][] };

const netColumns: Column[] = [
  { x: 101, top: 37, bottom: 96, stripes: [[0, 30, RED], [1, 27, "#808080"], [3, 23, SILVER], [10, 4, WHITE]] },
  { x: 202, top: 62, bottom: 96, stripes: [[0, 30, RED], [1, 27, "#808080"], [3, 23, SILVER], [10, 4, WHITE]] },
  { x: 304, top: 97, bottom: 188, stripes: [[0, 30, CYAN], [3, 22, SILVER], [7, 13, WHITE]] },
];
const shareColumns: Column[] = [
  { x: 101, top: 57, bottom: 105, stripes: [[0, 30, GREEN], [4, 19, "#808080"], [7, 12, SILVER], [11, 1, WHITE]] },
  { x: 202, top: 75, bottom: 105, stripes: [[0, 30, BLUE], [5, 17, "#808080"], [6, 14, SILVER], [11, 2, WHITE]] },
  { x: 304, top: 94, bottom: 105, stripes: [[0, 30, CYAN], [6, 14, SILVER], [8, 9, WHITE]] },
  { x: 405, top: 80, bottom: 105, stripes: [[0, 30, RED], [5, 17, "#808080"], [6, 14, SILVER], [11, 2, WHITE]] },
];

const Columns = ({ items }: { items: Column[] }) =>
  items.map(({ x, top, bottom, stripes }) =>
    stripes.map(([dx, w, fill]) => (
      <rect key={`${x}-${dx}`} x={x + dx} y={top} width={w} height={bottom - top} fill={fill} />
    )),
  );

const T = ({
  x,
  y,
  fill = RED,
  end,
  children,
}: {
  x: number;
  y: number;
  fill?: string;
  end?: boolean;
  children: string;
}) => (
  <text x={x} y={y + 4} fill={fill} textAnchor={end ? "end" : "start"}>
    {children.split(/([\u4e00-\u9fff]+)/).map((run, i) => (
      <tspan key={i} fontSize={i % 2 ? 15 : 13}>
        {run}
      </tspan>
    ))}
  </text>
);

const CategoryAxis = ({ y }: { y: number }) => (
  <path
    d={`M101.500 ${y - 4}V${y + 0.5}H506M202.500 ${y - 4}V${y}M304.500 ${y - 4}V${y}M405.500 ${y - 4}V${y}`}
    stroke={YELLOW}
    fill="none"
  />
);

const SectionTitle = ({ text }: { text: string }) => (
  <div className="flex h-[25px] border-r border-[#ff0000]">
    <h2 className="flex-1 text-center text-[15px] leading-7">{text}</h2>
    <TitleButton label="设" />
  </div>
);

const NetFlowPanel = () => (
  <section className="border-b border-[#ff0000]">
    <SectionTitle text="深圳超赢实时监控" />
    <svg viewBox="0 1 507 222" className="block h-[222px] w-[507px]" shapeRendering="crispEdges">
      <path d="M101 37.500H507M101 87.500H507M101 137.500H507M101 187.500H507M99.500 37V188" stroke={RED} strokeDasharray="1 1" />
      <Columns items={netColumns} />
      <path d="M101 96.500H507" stroke={RED} />
      <CategoryAxis y={189} />
      <T x={101} y={9}>时间: 2021/08/13</T>
      <T x={98} y={38} end>302.24</T>
      <T x={98} y={88} end>42.3</T>
      <T x={98} y={97} end>0</T>
      <T x={98} y={138} end>-217.63</T>
      <T x={98} y={188} end>-477.57</T>
      <T x={101} y={29}>302.24</T>
      <T x={202} y={54}>175.33</T>
      <T x={304} y={88} fill={CYAN}>-477.57</T>
      <T x={405} y={88} fill={WHITE}>0</T>
      <T x={1} y={197} fill={SILVER}>净额(万元)</T>
      <T x={1} y={213} fill={SILVER}>分类</T>
      <T x={101} y={213}>散户</T>
      <T x={202} y={213}>中户</T>
      <T x={304} y={213} fill={CYAN}>大户</T>
      <T x={405} y={213} fill={WHITE}>超大</T>
    </svg>
  </section>
);

const SharePanel = () => (
  <section>
    <SectionTitle text="深市超赢分类统计" />
    <svg viewBox="0 0 507 150" className="block h-[150px] w-[507px]" shapeRendering="crispEdges">
      <path d="M101 18.500H507M101 47.500H507M101 76.500H507M99.500 18V105" stroke={RED} strokeDasharray="1 1" />
      <Columns items={shareColumns} />
      <path d="M101 105.500H507" stroke={RED} />
      <CategoryAxis y={128} />
      <T x={101} y={8}>时间: 2021/08/13</T>
      <T x={98} y={19} end>75</T>
      <T x={98} y={48} end>50</T>
      <T x={98} y={77} end>25</T>
      <T x={98} y={106} end>0</T>
      <T x={102} y={49}>+0.06%</T>
      <T x={203} y={67}>+0.03%</T>
      <T x={304} y={86} fill={GREEN}>-0.10%</T>
      <T x={101} y={116} fill={GREEN}>41.99</T>
      <T x={202} y={116} fill={BLUE}>26.51</T>
      <T x={304} y={116} fill={CYAN}>9.80</T>
      <T x={405} y={116}>21.69</T>
      <T x={1} y={115} fill={SILVER}>比例%</T>
      <T x={1} y={133} fill={SILVER}>分类</T>
      <T x={101} y={142} fill={GREEN}>散户</T>
      <T x={202} y={142} fill={BLUE}>中户</T>
      <T x={304} y={142} fill={CYAN}>大户</T>
      <T x={405} y={142}>超大</T>
    </svg>
  </section>
);

const StockHeader = () => (
  <header className="flex h-[29px] items-center border-b border-[#ff0000]">
    <span className="h-[26px] w-2.5 bg-[#ffff00] text-center font-['Liberation_Sans',sans-serif] text-sm font-bold leading-4 text-[#ff0000]">
      T
    </span>
    <h1 className="flex items-center gap-1.5 pt-1 font-bold">
      <span className="font-['Liberation_Serif',serif] text-[26px] leading-7 text-[#00ffff]">300388</span>
      <span className="text-[21px] leading-7 text-[#ffff00]">节能国祯</span>
    </h1>
  </header>
);

export default function App() {
  return (
    <div className="flex min-h-screen bg-black font-['Liberation_Mono','Noto_Sans_CJK_SC',monospace] font-normal text-[#c0c0c0]">
      <main className="relative min-w-0 flex-1">
        <PricePanel />
        <VolumePanel />
        <FundFlowPanel />
        <MainHoldingPanel />
        <RetailHoldingPanel />
        <ActivityPanel />
        <ResearchPanel />
        <TimeAxis />
        <svg viewBox="0 0 9 9" shapeRendering="crispEdges" className="absolute left-0.5 top-0.5 h-[9px] w-[9px]">
          <path d="M1 1H6V6H1Z" fill="none" stroke={RED} strokeWidth={2} />
          <path d="M7 6h1v1h-1zM6 7h1v1h-1zM0 7h1v1h-1z" fill={RED} />
        </svg>
        <span className="absolute left-14 top-0.5 font-['Liberation_Sans',sans-serif] text-sm font-bold leading-4 text-[#ff0000]">
          ?
        </span>
      </main>
      <aside className="w-[508px] shrink-0 border-l border-[#ff0000]">
        <StockHeader />
        <OrderPanel />
        <IntradayPanel />
        <NetFlowPanel />
        <SharePanel />
      </aside>
    </div>
  );
}
